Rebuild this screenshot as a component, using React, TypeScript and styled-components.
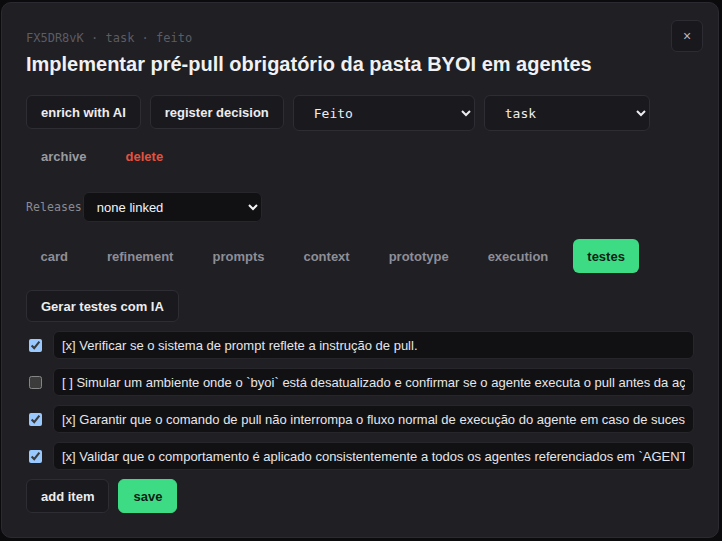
import React, { useState } from "react";
import styled, { createGlobalStyle, css } from "styled-components";

const GlobalStyle = createGlobalStyle`
  html, body {
    margin: 0;
    padding: 0;
    background: #0b0b0d;
    color-scheme: dark;
    font-family: "Liberation Sans", Arial, sans-serif;
  }
  * { box-sizing: border-box; }
`;

const mono = `"DejaVu Sans Mono", "Liberation Mono", monospace`;

const tabs = ["card", "refinement", "prompts", "context", "prototype", "execution", "testes"];

const initialItems = [
  { done: true, text: "[x] Verificar se o sistema de prompt reflete a instrução de pull." },
  {
    done: false,
    text: "[ ] Simular um ambiente onde o `byoi` está desatualizado e confirmar se o agente executa o pull antes da ação.",
  },
  {
    done: true,
    text: "[x] Garantir que o comando de pull não interrompa o fluxo normal de execução do agente em caso de sucesso.",
  },
  {
    done: true,
    text: "[x] Validar que o comportamento é aplicado consistentemente a todos os agentes referenciados em `AGENTS.md`.",
  },
];

export default function App() {
  const [items, setItems] = useState(initialItems);
  const [tab, setTab] = useState("testes");

  const toggle = (i: number) =>
    setItems((list) => list.map((it, idx) => (idx === i ? { ...it, done: !it.done } : it)));

  return (
    <>
      <GlobalStyle />
      <Backdrop>
        <Modal>
          <Header>
            <HeadText>
              <Meta>FX5DR8vK · task · feito</Meta>
              <Title>Implementar pré-pull obrigatório da pasta BYOI em agentes</Title>
            </HeadText>
            <CloseButton aria-label="close">×</CloseButton>
          </Header>

          <Toolbar>
            <Button>enrich with AI</Button>
            <Button>register decision</Button>
            <Select $width={182} defaultValue="Feito">
              <option>Feito</option>
              <option>A fazer</option>
              <option>Fazendo</option>
            </Select>
            <Select $width={166} defaultValue="task">
              <option>task</option>
              <option>bug</option>
            </Select>
            <GhostButton>archive</GhostButton>
            <GhostButton $danger>delete</GhostButton>
          </Toolbar>

          <ReleaseRow>
            <FieldLabel>Releases</FieldLabel>
            <ReleaseSelect defaultValue="none">
              <option value="none">none linked</option>
            </ReleaseSelect>
          </ReleaseRow>

          <Tabs>
            {tabs.map((t) => (
              <Tab key={t} $active={t === tab} onClick={() => setTab(t)}>
                {t}
              </Tab>
            ))}
          </Tabs>

          <Button>Gerar testes com IA</Button>

          <Checklist>
            {items.map((it, i) => (
              <CheckRow key={i}>
                <Checkbox type="checkbox" checked={it.done} onChange={() => toggle(i)} />
                <ItemInput value={it.text} readOnly />
              </CheckRow>
            ))}
          </Checklist>

          <Footer>
            <Button>add item</Button>
            <PrimaryButton>save</PrimaryButton>
          </Footer>
        </Modal>
      </Backdrop>
    </>
  );
}

const Backdrop = styled.div`
  height: 100vh;
  padding: 2px 3px 3px 1px;
  display: flex;
`;

const Modal = styled.div`
  flex: 1;
  display: flex;
  flex-direction: column;
  align-items: flex-start;
  background: #1f1f24;
  border: 1px solid #2a2a30;
  border-radius: 10px;
  padding: 16px 15px 24px 24px;
  overflow: hidden;
`;

const Header = styled.div`
  display: flex;
  justify-content: space-between;
  align-items: flex-start;
  align-self: stretch;
`;

const HeadText = styled.div`
  padding-top: 11px;
`;

const Meta = styled.div`
  font-family: ${mono};
  font-size: 12px;
  line-height: 16px;
  color: #5c5c63;
`;

const Title = styled.h1`
  margin: 5px 0 0;
  font-size: 20px;
  line-height: 26px;
  font-weight: 700;
  color: #f1f1f3;
`;

const CloseButton = styled.button`
  width: 32px;
  height: 32px;
  margin-top: 1px;
  border-radius: 6px;
  border: 1px solid #2c2c32;
  background: #19191d;
  color: #b9b9c0;
  font-size: 14px;
  line-height: 1;
  font-family: "Liberation Sans", Arial, sans-serif;
  cursor: pointer;
`;

const buttonBase = css`
  height: 34px;
  padding: 0 14px;
  border-radius: 6px;
  font-family: "Liberation Sans", Arial, sans-serif;
  font-size: 13px;
  font-weight: 700;
  cursor: pointer;
  white-space: nowrap;
`;

const Button = styled.button`
  ${buttonBase};
  border: 1px solid #2d2d33;
  background: #1a1a1e;
  color: #ededf0;
`;

const PrimaryButton = styled.button`
  ${buttonBase};
  border: 1px solid #3ddc84;
  background: #3ddc84;
  color: #0e1f15;
`;

const GhostButton = styled.button<{ $danger?: boolean }>`
  ${buttonBase};
  border: 1px solid transparent;
  background: transparent;
  color: ${(p) => (p.$danger ? "#e2533f" : "#9a9aa1")};
`;

const Toolbar = styled.div`
  display: flex;
  flex-wrap: wrap;
  gap: 8px 9px;
  margin-top: 18px;
  width: 640px;
`;

const Select = styled.select<{ $width: number }>`
  width: ${(p) => p.$width}px;
  height: 36px;
  padding: 0 6px 0 16px;
  border-radius: 6px;
  border: 1px solid #2d2d33;
  background: #1a1a1e;
  color: #ededf0;
  font-family: ${mono};
  font-size: 13px;
`;

const ReleaseRow = styled.div`
  display: flex;
  align-items: center;
  gap: 1px;
  margin-top: 19px;
`;

const FieldLabel = styled.span`
  font-family: ${mono};
  font-size: 11.6px;
  color: #8a8a91;
`;

const ReleaseSelect = styled.select`
  width: 179px;
  height: 30px;
  padding: 0 6px 0 9px;
  border-radius: 6px;
  border: 1px solid #26262b;
  background: #111114;
  color: #f4f4f6;
  font-family: "Liberation Sans", Arial, sans-serif;
  font-size: 13px;
`;

const Tabs = styled.div`
  display: flex;
  gap: 10px;
  margin-top: 17px;
  margin-bottom: 17px;
`;

const Tab = styled.button<{ $active?: boolean }>`
  ${buttonBase};
  padding: 0 14.5px;
  border: none;
  background: ${(p) => (p.$active ? "#3ddc84" : "transparent")};
  color: ${(p) => (p.$active ? "#0e1f15" : "#8e8e96")};
`;

const Checklist = styled.div`
  display: flex;
  flex-direction: column;
  gap: 9px;
  align-self: stretch;
  margin: 9px 9px 9px 0;
`;

const CheckRow = styled.label`
  display: flex;
  align-items: center;
  gap: 8px;
`;

const Checkbox = styled.input`
  width: 13px;
  height: 13px;
  margin: 0 3px 0 3px;
  flex-shrink: 0;
`;

const ItemInput = styled.input`
  flex: 1;
  min-width: 0;
  height: 28px;
  padding: 0 8px;
  border-radius: 6px;
  border: 1px solid #26262b;
  background: #111114;
  color: #e6e6ea;
  font-family: "Liberation Sans", Arial, sans-serif;
  font-size: 13px;
  outline: none;
`;

const Footer = styled.div`
  display: flex;
  gap: 9px;
`;
